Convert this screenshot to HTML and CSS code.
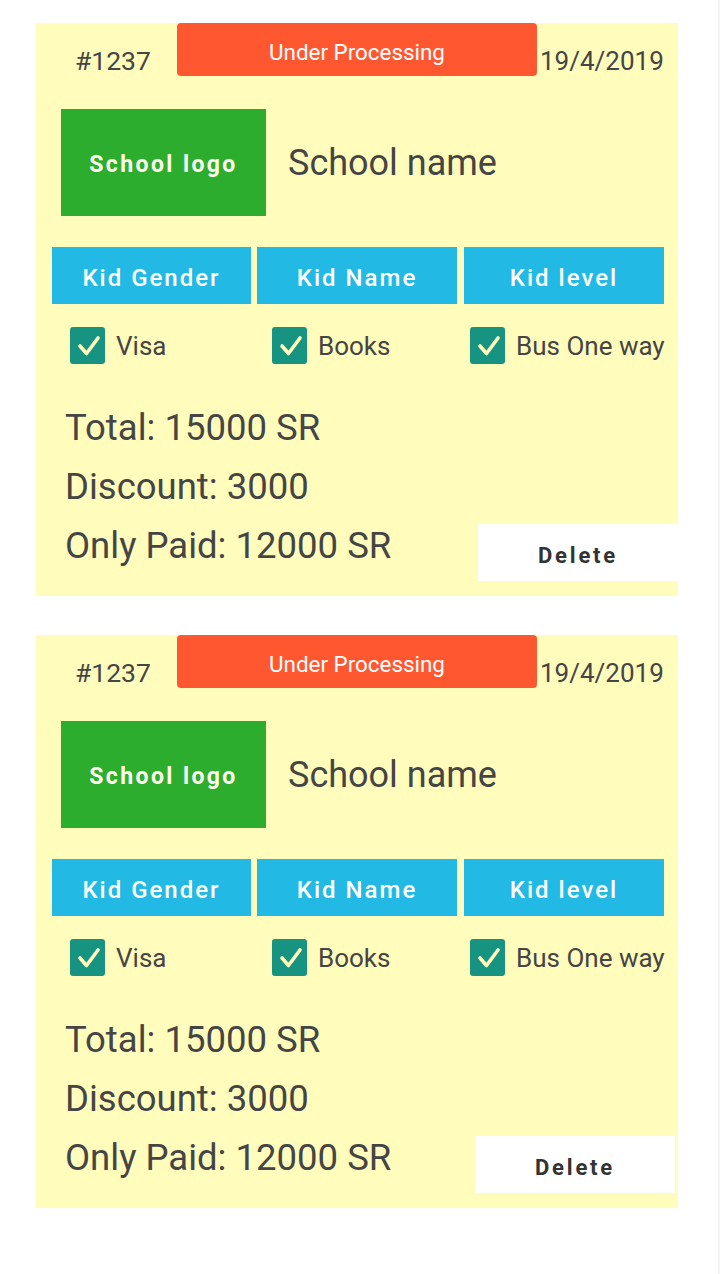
FILE: index.html
```html
<!DOCTYPE html>
<html>
<head>
<meta charset="utf-8">
<link rel="stylesheet" href="styles.css">
</head>
<body>
<div class="list">
  <div class="card">
    <div class="head">
      <span class="num">#1237</span>
      <span class="status">Under Processing</span>
      <span class="date">19/4/2019</span>
    </div>
    <div class="school">
      <div class="logo">School logo</div>
      <div class="sname">School name</div>
    </div>
    <div class="kids">
      <div class="kid k1">Kid Gender</div>
      <div class="kid k2">Kid Name</div>
      <div class="kid k3">Kid level</div>
    </div>
    <div class="checks">
      <div class="chk c1"><span class="box"><svg viewBox="0 0 35 37" width="35" height="37"><path d="M10 19 L16.5 26.5 L28 11" fill="none" stroke="#fffcbc" stroke-width="3.6" stroke-linecap="round" stroke-linejoin="round"/></svg></span><span class="lbl">Visa</span></div>
      <div class="chk c2"><span class="box"><svg viewBox="0 0 35 37" width="35" height="37"><path d="M10 19 L16.5 26.5 L28 11" fill="none" stroke="#fffcbc" stroke-width="3.6" stroke-linecap="round" stroke-linejoin="round"/></svg></span><span class="lbl">Books</span></div>
      <div class="chk c3"><span class="box"><svg viewBox="0 0 35 37" width="35" height="37"><path d="M10 19 L16.5 26.5 L28 11" fill="none" stroke="#fffcbc" stroke-width="3.6" stroke-linecap="round" stroke-linejoin="round"/></svg></span><span class="lbl">Bus One way</span></div>
    </div>
    <div class="totals">
      <div class="line">Total: 15000 SR</div>
      <div class="line">Discount: 3000</div>
      <div class="last">
        <div class="line">Only Paid: 12000 SR</div>
        <div class="del">Delete</div>
      </div>
    </div>
  </div>

  <div class="card">
    <div class="head">
      <span class="num">#1237</span>
      <span class="status">Under Processing</span>
      <span class="date">19/4/2019</span>
    </div>
    <div class="school">
      <div class="logo">School logo</div>
      <div class="sname">School name</div>
    </div>
    <div class="kids">
      <div class="kid k1">Kid Gender</div>
      <div class="kid k2">Kid Name</div>
      <div class="kid k3">Kid level</div>
    </div>
    <div class="checks">
      <div class="chk c1"><span class="box"><svg viewBox="0 0 35 37" width="35" height="37"><path d="M10 19 L16.5 26.5 L28 11" fill="none" stroke="#fffcbc" stroke-width="3.6" stroke-linecap="round" stroke-linejoin="round"/></svg></span><span class="lbl">Visa</span></div>
      <div class="chk c2"><span class="box"><svg viewBox="0 0 35 37" width="35" height="37"><path d="M10 19 L16.5 26.5 L28 11" fill="none" stroke="#fffcbc" stroke-width="3.6" stroke-linecap="round" stroke-linejoin="round"/></svg></span><span class="lbl">Books</span></div>
      <div class="chk c3"><span class="box"><svg viewBox="0 0 35 37" width="35" height="37"><path d="M10 19 L16.5 26.5 L28 11" fill="none" stroke="#fffcbc" stroke-width="3.6" stroke-linecap="round" stroke-linejoin="round"/></svg></span><span class="lbl">Bus One way</span></div>
    </div>
    <div class="totals">
      <div class="line">Total: 15000 SR</div>
      <div class="line">Discount: 3000</div>
      <div class="last">
        <div class="line">Only Paid: 12000 SR</div>
        <div class="del del-shift">Delete</div>
      </div>
    </div>
  </div>
</div>
</body>
</html>
```

FILE: styles.css
```css
html, body {
  margin: 0;
  padding: 0;
  background: #ffffff;
}
body {
  font-family: Roboto, "Noto Sans", sans-serif;
  color: #454545;
  width: 720px;
  height: 1274px;
  box-sizing: border-box;
  border-right: 2px solid #f4f4f4;
}
.list {
  padding-top: 23px;
  display: flex;
  flex-direction: column;
  gap: 39px;
}
.card {
  margin-left: 36px;
  width: 642px;
  background: #fffcbc;
  padding-bottom: 15px;
}
.head {
  display: flex;
  align-items: flex-end;
  height: 53px;
}
.num {
  width: 102px;
  padding-left: 39px;
  font-size: 26.5px;
  line-height: 30px;
}
.status {
  align-self: flex-start;
  width: 360px;
  height: 53px;
  box-sizing: border-box;
  padding-top: 5px;
  background: #ff5830;
  border-radius: 4px;
  color: #ffffff;
  font-size: 22.4px;
  display: flex;
  align-items: center;
  justify-content: center;
}
.date {
  margin-left: 3px;
  font-size: 26px;
  line-height: 30px;
}
.school {
  display: flex;
  align-items: center;
  margin-top: 33px;
  margin-left: 25px;
}
.logo {
  width: 205px;
  height: 107px;
  box-sizing: border-box;
  padding-top: 4px;
  background: #2dad2d;
  color: #fffff0;
  font-weight: 700;
  font-size: 23px;
  letter-spacing: 2.4px;
  display: flex;
  align-items: center;
  justify-content: center;
}
.sname {
  margin-left: 22px;
  font-size: 36px;
}
.kids {
  display: flex;
  margin-top: 31px;
  margin-left: 16px;
}
.kid {
  height: 57px;
  box-sizing: border-box;
  padding-top: 5px;
  background: #22bae4;
  color: #ffffff;
  font-weight: 500;
  font-size: 24px;
  letter-spacing: 2px;
  display: flex;
  align-items: center;
  justify-content: center;
}
.k1 { width: 199px; }
.k2 { width: 200px; margin-left: 6px; }
.k3 { width: 200px; margin-left: 7px; }
.checks {
  display: flex;
  margin-top: 23px;
  padding-left: 34px;
  height: 37px;
  align-items: center;
}
.chk {
  display: flex;
  align-items: center;
}
.c1 { width: 202px; }
.c2 { width: 198px; }
.box {
  width: 35px;
  height: 37px;
  background: #169381;
  border-radius: 3px;
  display: block;
}
.box svg { display: block; }
.lbl {
  margin-left: 11px;
  font-size: 26px;
}
.totals {
  margin-top: 34px;
  padding-left: 29px;
}
.line {
  font-size: 36.5px;
  line-height: 59px;
  height: 59px;
}
.last {
  display: flex;
  justify-content: space-between;
  align-items: flex-start;
}
.del {
  margin-top: 8px;
  width: 200px;
  height: 57px;
  box-sizing: border-box;
  padding-top: 5px;
  background: #ffffff;
  color: #333333;
  font-weight: 700;
  font-size: 22px;
  letter-spacing: 2.8px;
  display: flex;
  align-items: center;
  justify-content: center;
}
.del-shift { margin-right: 3px; }
```
